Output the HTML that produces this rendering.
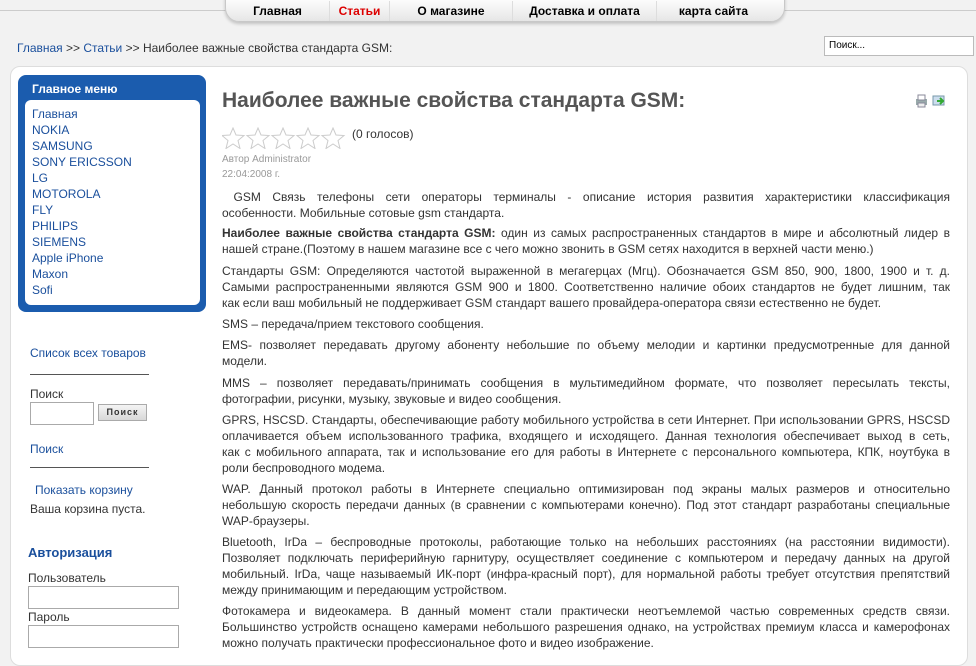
<!DOCTYPE html>
<html><head><meta charset="utf-8"><style>
*{margin:0;padding:0;box-sizing:border-box}
body{width:976px;height:651px;overflow:hidden;background:#f2f2f2;font-family:"Liberation Sans",Tahoma,sans-serif;font-size:12px;color:#333;position:relative}
.topline{position:absolute;left:0;right:0;top:10px;height:1px;background:#ccc}
.nav{position:absolute;left:225px;top:-4px;width:560px;height:26px;background:linear-gradient(#fff,#e6e6e6);border:1px solid #c8c8c8;border-radius:0 0 14px 14px;box-shadow:0 2px 3px rgba(0,0,0,.2);display:flex;padding-top:4px}
.nav div{font-weight:bold;font-size:12px;color:#000;text-align:center;border-right:1px solid #ddd;line-height:20px}
a{color:#1a4f9c;text-decoration:none}
.bc{position:absolute;left:17px;top:41px;font-size:12px;color:#333}
.bc a{color:#1a4f9c}
.search{position:absolute;left:824px;top:36px;width:150px;height:20px;background:#fff;border:1px solid #bbb;font-size:10px;padding:3px 4px;color:#000}
.panel{position:absolute;left:10px;top:66px;width:958px;height:600px;background:#fff;border:1px solid #ddd;border-radius:10px}
.menu{position:absolute;left:18px;top:75px;width:188px;height:237px;background:#1b5cae;border-radius:8px}
.menu h3{color:#fff;font-size:12px;padding:7px 0 0 14px;height:24px}
.menu .in{position:absolute;left:7px;top:25px;width:175px;height:205px;background:#fff;border-radius:6px;padding:6px 0 0 7px;line-height:16px}
.menu .in a{display:block;color:#1a4f9c}
.side{position:absolute;left:30px;font-size:12px}
.hr{position:absolute;left:30px;width:119px;height:1px;background:#555}
.inp{position:absolute;background:#fff;border:1px solid #aaa}
.btn{position:absolute;left:98px;top:404px;width:49px;height:17px;background:linear-gradient(#f4f4f4,#d8d8d8);border:1px solid #aaa;font-size:9px;font-weight:bold;text-align:center;line-height:15px;letter-spacing:1px}
h1{position:absolute;left:222px;top:89px;font-size:21px;color:#555;font-weight:bold}
.stars{position:absolute;left:222px;top:127px;display:flex;gap:1px}
.meta{position:absolute;left:222px;font-size:10px;color:#999}
.txt{position:absolute;left:222px;top:189px;width:728px;line-height:16px;color:#333}
.txt .l{text-align:justify;text-align-last:justify;white-space:nowrap}
.txt .e{white-space:nowrap}
.g{height:5px}
</style></head><body>
<div class="topline"></div>
<div class="nav">
<div style="width:104px">Главная</div>
<div style="width:60px;color:#d00">Статьи</div>
<div style="width:123px">О магазине</div>
<div style="width:144px">Доставка и оплата</div>
<div style="width:113px;border:none">карта сайта</div>
</div>
<div class="bc"><a>Главная</a> &gt;&gt; <a>Статьи</a> &gt;&gt; Наиболее важные свойства стандарта GSM:</div>
<div class="search">Поиск...</div>
<div class="panel"></div>
<div class="menu"><h3>Главное меню</h3><div class="in">
<a>Главная</a><a>NOKIA</a><a>SAMSUNG</a><a>SONY ERICSSON</a><a>LG</a><a>MOTOROLA</a><a>FLY</a><a>PHILIPS</a><a>SIEMENS</a><a>Apple iPhone</a><a>Maxon</a><a>Sofi</a></div></div>
<div class="side" style="top:346px"><a>Список всех товаров</a></div>
<div class="hr" style="top:374px"></div>
<div class="side" style="top:387px">Поиск</div>
<div class="inp" style="left:30px;top:402px;width:64px;height:23px"></div>
<div class="btn">Поиск</div>
<div class="side" style="top:442px"><a>Поиск</a></div>
<div class="hr" style="top:467px"></div>
<div class="side" style="top:483px;left:35px"><a>Показать корзину</a></div>
<div class="side" style="top:502px">Ваша корзина пуста.</div>
<div class="side" style="top:545px;left:28px;color:#1a4f9c;font-weight:bold;font-size:13px">Авторизация</div>
<div class="side" style="top:571px;left:28px">Пользователь</div>
<div class="inp" style="left:28px;top:586px;width:151px;height:23px"></div>
<div class="side" style="top:610px;left:28px">Пароль</div>
<div class="inp" style="left:28px;top:625px;width:151px;height:23px"></div>
<h1>Наиболее важные свойства стандарта GSM:</h1>
<svg style="position:absolute;left:915px;top:94px" width="30" height="14"><rect x="1" y="5" width="11" height="6" fill="#9aa" /><rect x="3" y="1" width="7" height="5" fill="#fff" stroke="#889"/><rect x="3" y="9" width="7" height="4" fill="#eee" stroke="#889"/><rect x="18" y="2" width="11" height="9" fill="#cde" stroke="#79a"/><path d="M22 7h6M25 4l3 3-3 3" stroke="#3a3" stroke-width="2" fill="none"/></svg>
<div class="stars">
<svg width="124" height="22"><g fill="none" stroke="#ccc">
<path id="s" d="M11 1l3 7 8 .5-6 5 2 8-7-4.5-7 4.5 2-8-6-5 8-.5z"/>
<use href="#s" x="25"/><use href="#s" x="50"/><use href="#s" x="75"/><use href="#s" x="100"/></g></svg>
</div>
<div style="position:absolute;left:352px;top:127px;font-size:12px">(0 голосов)</div>
<div class="meta" style="top:154px">Автор Administrator</div>
<div class="meta" style="top:169px">22:04:2008 г.</div>
<div class="txt">
<div class="l">&nbsp;GSM Связь телефоны сети операторы терминалы - описание история развития характеристики классификация</div><div class="e">особенности. Мобильные сотовые gsm стандарта.</div>
<div style="height:4px"></div>
<div class="l"><b>Наиболее важные свойства стандарта GSM:</b> один из самых распространенных стандартов в мире и абсолютный лидер в</div><div class="e">нашей стране.(Поэтому в нашем магазине все с чего можно звонить в GSM сетях находится в верхней части меню.)</div>
<div style="height:6px"></div>
<div class="l">Стандарты GSM: Определяются частотой выраженной в мегагерцах (Мгц). Обозначается GSM 850, 900, 1800, 1900 и т. д.</div>
<div class="l">Самыми распространенными являются GSM 900 и 1800. Соответственно наличие обоих стандартов не будет лишним, так</div>
<div class="e">как если ваш мобильный не поддерживает GSM стандарт вашего провайдера-оператора связи естественно не будет.</div>
<div class="g"></div>
<div class="e">SMS – передача/прием текстового сообщения.</div>
<div class="g"></div>
<div class="l">EMS- позволяет передавать другому абоненту небольшие по объему мелодии и картинки предусмотренные для данной</div>
<div class="e">модели.</div>
<div style="height:6px"></div>
<div class="l">MMS – позволяет передавать/принимать сообщения в мультимедийном формате, что позволяет пересылать тексты,</div>
<div class="e">фотографии, рисунки, музыку, звуковые и видео сообщения.</div>
<div class="g"></div>
<div class="l">GPRS, HSCSD. Стандарты, обеспечивающие работу мобильного устройства в сети Интернет. При использовании GPRS, HSCSD</div>
<div class="l">оплачивается объем использованного трафика, входящего и исходящего. Данная технология обеспечивает выход в сеть,</div>
<div class="l">как с мобильного аппарата, так и использование его для работы в Интернете с персонального компьютера, КПК, ноутбука в</div>
<div class="e">роли беспроводного модема.</div>
<div class="g"></div>
<div class="l">WAP. Данный протокол работы в Интернете специально оптимизирован под экраны малых размеров и относительно</div>
<div class="l">небольшую скорость передачи данных (в сравнении с компьютерами конечно). Под этот стандарт разработаны специальные</div>
<div class="e">WAP-браузеры.</div>
<div class="g"></div>
<div class="l">Bluetooth, IrDa – беспроводные протоколы, работающие только на небольших расстояниях (на расстоянии видимости).</div>
<div class="l">Позволяет подключать периферийную гарнитуру, осуществляет соединение с компьютером и передачу данных на другой</div>
<div class="l">мобильный. IrDa, чаще называемый ИК-порт (инфра-красный порт), для нормальной работы требует отсутствия препятствий</div>
<div class="e">между принимающим и передающим устройством.</div>
<div class="g"></div>
<div class="l">Фотокамера и видеокамера. В данный момент стали практически неотъемлемой частью современных средств связи.</div>
<div class="l">Большинство устройств оснащено камерами небольшого разрешения однако, на устройствах премиум класса и камерофонах</div>
<div class="e">можно получать практически профессиональное фото и видео изображение.</div>
</div>
</body></html>
